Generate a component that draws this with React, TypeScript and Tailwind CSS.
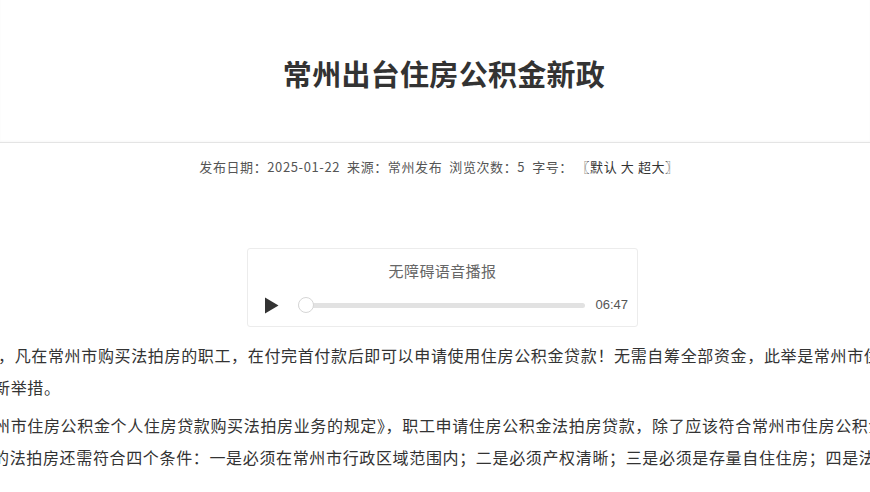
const FONT = "font-['Noto_Sans_CJK_SC','Noto_Sans',sans-serif]";

function PlayIcon() {
  return (
    <svg width="15" height="17" viewBox="0 0 15 17" aria-hidden="true">
      <path d="M1 0.5 L14.5 8.5 L1 16.5 Z" fill="#333" />
    </svg>
  );
}

function AudioPlayer() {
  return (
    <div className="w-[391px] rounded-[3px] border border-[#ececec] bg-white pt-[11px] pb-[11px]">
      <div className="text-center text-[15px] leading-[22px] tracking-[0.4px] text-[#666]">
        无障碍语音播报
      </div>
      <div className="mt-[13px] flex h-[20px] items-center pl-[16px] pr-[9px]">
        <PlayIcon />
        <div className="relative ml-[19px] h-[5px] flex-1 rounded-full bg-[#e2e2e2]">
          <span className="absolute left-0 top-1/2 h-[16px] w-[16px] -translate-y-1/2 rounded-full border border-[#d6d6d6] bg-white" />
        </div>
        <span className="ml-[10px] text-[13px] text-[#555] font-['Liberation_Sans',sans-serif]">06:47</span>
      </div>
    </div>
  );
}

const lines = [
  { text: "，凡在常州市购买法拍房的职工，在付完首付款后即可以申请使用住房公积金贷款！无需自筹全部资金，此举是常州市住房公积金", offset: "ml-[-2px]" },
  { text: "新举措。", offset: "ml-[-6px]" },
  { text: "州市住房公积金个人住房贷款购买法拍房业务的规定》，职工申请住房公积金法拍房贷款，除了应该符合常州市住房公积金", offset: "ml-[-6px] mt-[6px]" },
  { text: "的法拍房还需符合四个条件：一是必须在常州市行政区域范围内；二是必须产权清晰；三是必须是存量自住住房；四是法拍房", offset: "ml-[-7px]" },
];

export default function App() {
  return (
    <div className={`h-[492px] w-full overflow-hidden bg-white ${FONT}`}>
      <header className="border-b border-[#e4e4e4] pt-[53px] pb-[49px] pl-[18px] text-center shadow-[0_-1px_2px_rgba(0,0,0,0.03)_inset]">
        <h1 className="text-[29px] font-bold leading-[40px] tracking-[0.3px] text-[#333]">常州出台住房公积金新政</h1>
      </header>

      <div className="mt-[14px] flex justify-center pl-[8px] text-[13px] leading-[20px] tracking-[0.6px] text-[#555]">
        <span>
          发布日期：2025-01-22&nbsp;&nbsp;来源：常州发布&nbsp;&nbsp;浏览次数：5&nbsp;&nbsp;字号：&nbsp;
          <span className="text-[#333]">〖默认 大 超大〗</span>
        </span>
      </div>

      <div className="mt-[71px] flex justify-center pl-[15px]">
        <AudioPlayer />
      </div>

      <div className="mt-[12px] text-[16px] leading-[32px] tracking-[0.65px] text-[#333]">
        {lines.map((line) => (
          <p key={line.text} className={`whitespace-nowrap ${line.offset}`}>
            {line.text}
          </p>
        ))}
      </div>
    </div>
  );
}
